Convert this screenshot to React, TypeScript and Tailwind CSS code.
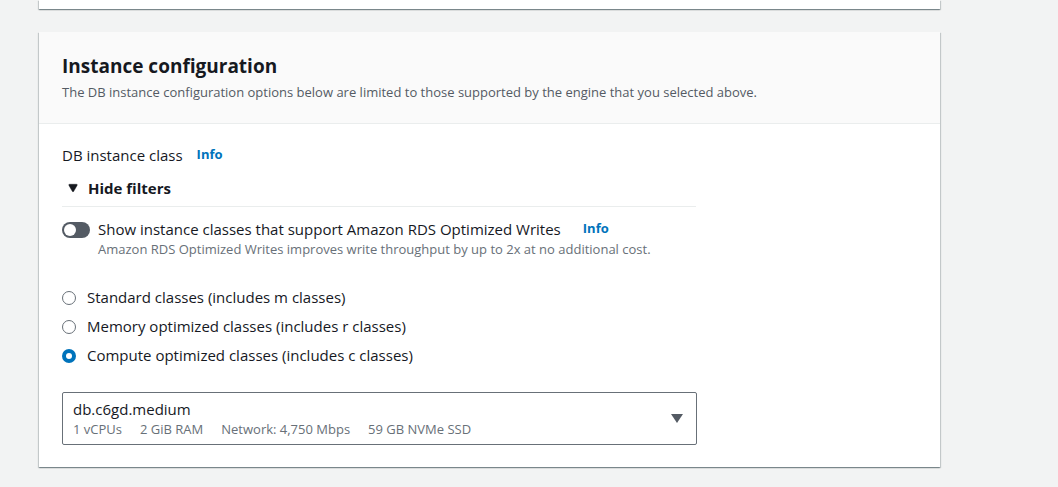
import { Triangle } from 'lucide-react'

function InfoLink({ gap = 'ml-[14px]' }: { gap?: string }) {
  return <span className={`${gap} text-[13px] font-bold text-[#0073bb]`}>Info</span>
}

function Radio({ label, checked }: { label: string; checked?: boolean }) {
  return (
    <label className="flex h-[29px] items-center">
      {checked ? (
        <span className="flex h-[14px] w-[14px] items-center justify-center rounded-full bg-[#0073bb]">
          <span className="h-[6px] w-[6px] rounded-full bg-white" />
        </span>
      ) : (
        <span className="h-[14px] w-[14px] rounded-full border-[1.5px] border-[#687078] bg-white" />
      )}
      <span className="ml-[11px] text-[15px] text-[#16191f]">{label}</span>
    </label>
  )
}

export default function App() {
  return (
    <div
      className="h-[487px] overflow-hidden bg-[#f2f3f3] text-[#16191f]"
      style={{ fontFamily: '"Open Sans", "Noto Sans", sans-serif' }}
    >
      {/* previous card tail */}
      <div className="ml-[39px] h-[9px] w-[901px] bg-white shadow-[0_1px_1px_0_rgba(0,28,36,0.3),1px_1px_1px_0_rgba(0,28,36,0.15),-1px_1px_1px_0_rgba(0,28,36,0.15)]" />

      <div className="ml-[39px] mt-[23px] w-[901px] bg-white shadow-[0_1px_1px_0_rgba(0,28,36,0.3),1px_1px_1px_0_rgba(0,28,36,0.15),-1px_1px_1px_0_rgba(0,28,36,0.15)]">
        <div className="h-[92px] border-b border-[#eaeded] bg-[#fafafa] px-[23px] pt-[23px]">
          <h2 className="text-[19px] font-bold leading-[22px]">Instance configuration</h2>
          <p className="mt-[6px] text-[13px] leading-[18px] text-[#545b64]">
            The DB instance configuration options below are limited to those supported by the engine that you selected above.
          </p>
        </div>

        <div className="px-[23px] pb-[22px] pt-[20px]">
          <div className="flex h-[22px] items-center text-[15px]">
            DB instance class
            <InfoLink />
          </div>

          <div className="w-[634px]">
            <div className="mt-[11px] flex h-[22px] items-center">
              <Triangle className="ml-[6px] h-[10px] w-[10px] rotate-180 fill-[#16191f] text-[#16191f]" strokeWidth={1} />
              <span className="ml-[10px] text-[15px] font-bold">Hide filters</span>
            </div>
            <div className="mt-[7px] h-px bg-[#eaeded]" />
          </div>

          <div className="mt-[11px] flex">
            <span className="mt-[4px] flex h-[16px] w-[28px] items-center rounded-full bg-[#545b64] px-[2px]">
              <span className="h-[12px] w-[12px] rounded-full bg-white" />
            </span>
            <div className="ml-[8px]">
              <div className="flex h-[22px] items-center text-[15px]">
                Show instance classes that support Amazon RDS Optimized Writes
                <InfoLink gap="ml-[22px]" />
              </div>
              <div className="text-[13px] leading-[18px] text-[#687078]">
                Amazon RDS Optimized Writes improves write throughput by up to 2x at no additional cost.
              </div>
            </div>
          </div>

          <div className="mt-[25px]">
            <Radio label="Standard classes (includes m classes)" />
            <Radio label="Memory optimized classes (includes r classes)" />
            <Radio label="Compute optimized classes (includes c classes)" checked />
          </div>

          <div className="mt-[22px] flex h-[53px] w-[635px] items-center rounded-[2px] border border-[#687078] pl-[10px] pr-[12px]">
            <div className="flex-1 pt-[1px]">
              <div className="text-[15px] leading-[21px]">db.c6gd.medium</div>
              <div className="flex gap-[18px] text-[13px] leading-[19px] text-[#687078]">
                <span>1 vCPUs</span>
                <span>2 GiB RAM</span>
                <span>Network: 4,750 Mbps</span>
                <span>59 GB NVMe SSD</span>
              </div>
            </div>
            <svg width="12" height="10" viewBox="0 0 12 10" className="mr-[1px]">
              <path d="M0 0 H12 L6 9 Z" fill="#545b64" />
            </svg>
          </div>
        </div>
      </div>
    </div>
  )
}
